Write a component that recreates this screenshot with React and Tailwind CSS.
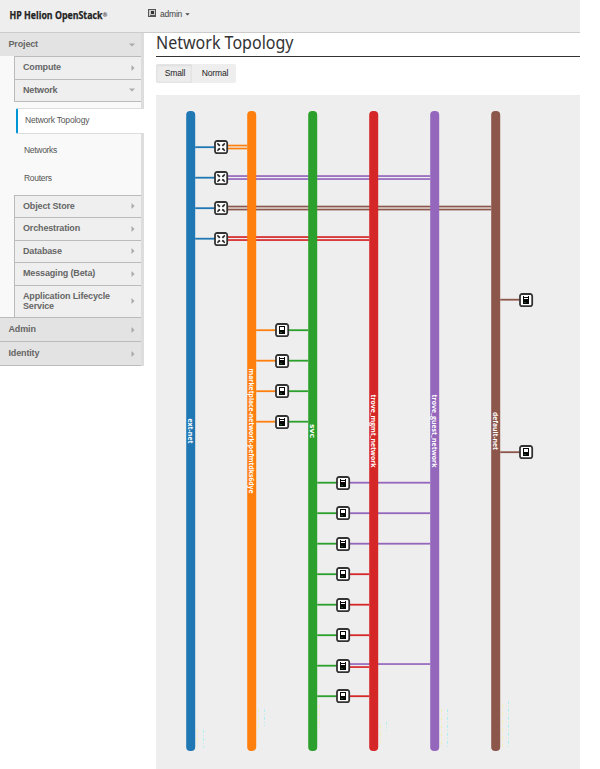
import React from "react";

const NETWORKS = [
  { name: "ext-net", color: "#1f77b4", length: 25 },
  { name: "marketplace-network-pefmtdks6dye", color: "#ff7f0e", length: 125 },
  { name: "svc", color: "#2ca02c", length: 14 },
  { name: "trove_mgmt_network", color: "#d62728", length: 73 },
  { name: "trove_guest_network", color: "#9467bd", length: 73 },
  { name: "default-net", color: "#8c564b", length: 38 },
];

// col: network whose right side holds the device; links: networks reached on the right
const DEVICES = [
  { row: 0, kind: "router", col: 0, links: [1, 1] },
  { row: 1, kind: "router", col: 0, links: [4, 4] },
  { row: 2, kind: "router", col: 0, links: [5, 5] },
  { row: 3, kind: "router", col: 0, links: [3, 3] },
  { row: 5, kind: "b", col: 5, links: [] },
  { row: 6, kind: "a", col: 1, links: [2] },
  { row: 7, kind: "b", col: 1, links: [2] },
  { row: 8, kind: "a", col: 1, links: [2] },
  { row: 9, kind: "b", col: 1, links: [2] },
  { row: 10, kind: "a", col: 5, links: [] },
  { row: 11, kind: "b", col: 2, links: [4] },
  { row: 12, kind: "a", col: 2, links: [4] },
  { row: 13, kind: "b", col: 2, links: [4] },
  { row: 14, kind: "a", col: 2, links: [3] },
  { row: 15, kind: "b", col: 2, links: [3] },
  { row: 16, kind: "a", col: 2, links: [3] },
  { row: 17, kind: "b", col: 2, links: [4, 3] },
  { row: 18, kind: "a", col: 2, links: [3] },
];

const SPECKS = [
  [41, 635, 652, "#eeeeb5"], [47, 635, 653, "#b5eeee"],
  [102, 614, 636, "#eeeeb5"], [108, 614, 631, "#b5eeee"],
  [163, 610, 633, "#eeeeb5"], [224, 630, 648, "#eeeeb5"],
  [230, 627, 636, "#b5eeee"], [285, 614, 652, "#eeeeb5"],
  [291, 614, 652, "#b5eeee"], [346, 609, 652, "#eeeeb5"],
  [352, 606, 653, "#b5eeee"],
];

const netX = (i) => 30.2 + i * 61;
const rowY = (row) => 52.1 + row * 30.5;

function Device({ kind, x, y }) {
  return (
    <g transform={`translate(${x} ${y})`}>
      <rect x="-6" y="-6" width="12.2" height="12.2" rx="2" fill="#fff" stroke="#333" strokeWidth="1.8" />
      {kind === "router" ? (
        <g stroke="#222" strokeWidth="1.5" fill="none">
          <path d="M-3.6-3.6l2.4 2.4M3.8-3.6L1.4-1.2M-3.6 3.8l2.4-2.4M3.8 3.8L1.4 1.4" />
          <path d="M-3.2-1.2h2v-1.4M3.4-1.2H1.4v-1.4M-1.2 3V1.4h-2M1.4 3V1.4h2" strokeWidth=".4" />
        </g>
      ) : (
        <g shapeRendering="crispEdges">
          <rect x="-3" y="-4" width="6" height="8" fill="#080808" />
          {kind === "a" ? (
            <rect x="-2" y="-3" width="4" height="3" fill="#fff" />
          ) : (
            <>
              <rect x="-2" y="-4" width="4" height="1" fill="#fff" />
              <rect x="-2" y="-2" width="4" height="1" fill="#fff" />
            </>
          )}
          <rect x="-2" y="2" width="2" height="1" fill="#174f24" />
        </g>
      )}
    </g>
  );
}

function Topology() {
  return (
    <svg className="block h-[674px] w-[424px] bg-[#eee]" viewBox="0 0 424 674">
      {DEVICES.map((d) => {
        const y = rowY(d.row);
        const start = netX(d.col) + 41;
        const single = d.links.length === 1;
        return (
          <g key={d.row}>
            <rect x={netX(d.col) + 9} y={y - 0.8} width="27" height="1.8" fill={NETWORKS[d.col].color} />
            {d.links.map((n, k) => {
              const off = single ? 0 : k === 0 ? -1.6 : 1.4;
              return (
                <rect key={k} x={start} y={y - 0.8 + off} width={netX(n) - start} height={single ? 1.8 : 1.7} fill={NETWORKS[n].color} />
              );
            })}
          </g>
        );
      })}
      {NETWORKS.map((n, i) => (
        <g key={n.name}>
          <rect x={netX(i)} y="16" width="9" height="640" rx="4" fill={n.color} />
          <text
            transform={`translate(${netX(i) + 2.2} 336) rotate(90)`}
            textAnchor="middle"
            textLength={n.length}
            lengthAdjust="spacingAndGlyphs"
            fill="#fff"
            className="font-['Open_Sans',sans-serif] text-[7.5px] font-bold"
          >
            {n.name}
          </text>
        </g>
      ))}
      {DEVICES.map((d) => (
        <Device key={d.row} kind={d.kind} x={Math.round(netX(d.col) + 34.8)} y={Math.round(rowY(d.row))} />
      ))}
      {SPECKS.map(([x, a, b, c]) => (
        <path key={x} d={`M${x + 0.5} ${a}V${b}`} stroke={c} strokeDasharray="3 2 1 2" />
      ))}
    </svg>
  );
}

function Caret({ open }) {
  return (
    <svg className="h-[6px] w-[6px] shrink-0" viewBox="0 0 6 6">
      <path d={open ? "M0 1.5h6L3 4.5z" : "M2.5 0v6L5.5 3z"} fill="#aaa" />
    </svg>
  );
}

function Item({ label, open, h }) {
  return (
    <div className={`${h} flex items-center justify-between border-t border-l border-[#bbb] bg-[#efefef] pr-[6px] pb-[2px] pl-[8px] text-[9px] leading-[10px] font-bold text-[#666]`}>
      <span className="w-[94px] tracking-[-0.15px]">{label}</span>
      <span className="mt-[1px] flex"><Caret open={open} /></span>
    </div>
  );
}

function Section({ label, open, h }) {
  return (
    <div className={`${h} flex items-center justify-between bg-[#e3e3e3] pr-[6px] pl-[8.5px] text-[9px] font-bold text-[#666]`}>
      <span className="tracking-[-0.15px]">{label}</span>
      <Caret open={open} />
    </div>
  );
}

export default function App() {
  return (
    <div className="h-[769px] w-[600px] overflow-hidden bg-white font-['Liberation_Sans',Arial,sans-serif]">
      <header className="flex h-[33px] w-[580px] border-b border-[#ccc] bg-[#eee]">
        <svg className="h-[32px] w-[148px] shrink-0" viewBox="0 0 148 32">
          <text x="9.5" y="19" textLength="93" lengthAdjust="spacingAndGlyphs" fill="#222" stroke="#222" strokeWidth=".25" className="font-['Open_Sans',sans-serif] text-[10.5px] font-bold">
            HP Helion OpenStack
          </text>
          <text x="102.8" y="16.5" fill="#333" className="font-['Open_Sans',sans-serif] text-[5.5px] font-bold">®</text>
        </svg>
        <div className="flex h-[28px] items-center text-[8.5px] text-[#444]">
          <svg className="mt-[-2px] mr-[4px] h-[8px] w-[8px]" viewBox="0 0 8 8" shapeRendering="crispEdges">
            <rect x=".5" y=".5" width="7" height="7" fill="#ccc" stroke="#555" />
            <rect x="3" y="2" width="3" height="3" fill="#333" />
            <rect x="2" y="6" width="5" height="1" fill="#555" />
          </svg>
          <span className="tracking-[-0.2px]">admin</span>
          <svg className="ml-[3px] h-[3px] w-[5px]" viewBox="0 0 5 3"><path d="M.3.3h4.4L2.5 2.6z" fill="#444" /></svg>
        </div>
      </header>
      <div className="flex">
        <aside className="h-[333px] w-[144px] shrink-0 bg-[linear-gradient(to_right,#f9f9f9_141px,#ddd_141px)]">
          <div className="w-[141px]"><Section label="Project" open h="h-[23px]" /></div>
          <div className="ml-[14px] w-[127px] border-b border-[#bbb]">
            <Item label="Compute" h="h-[23px]" />
            <Item label="Network" open h="h-[22px]" />
          </div>
          <nav className="h-[93px] pt-[6px] text-[8.5px] text-[#555]">
            <div className="ml-[16px] flex h-[26px] items-center rounded-l-[2px] border-y border-l-2 border-y-[#ddd] border-l-[#0096d6] bg-white pb-[2px] pl-[7px]">
              <span className="tracking-[-0.2px]">Network Topology</span>
            </div>
            <div className="mt-[2px] flex h-[28px] items-center pl-[24px] tracking-[-0.3px]">Networks</div>
            <div className="flex h-[28px] items-center pl-[24px] tracking-[-0.3px]">Routers</div>
          </nav>
          <div className="ml-[14px] w-[127px]">
            <Item label="Object Store" h="h-[22px]" />
            <Item label="Orchestration" h="h-[23px]" />
            <Item label="Database" h="h-[22px]" />
            <Item label="Messaging (Beta)" h="h-[23px]" />
            <Item label="Application Lifecycle Service" h="h-[32px]" />
          </div>
          <div className="w-[141px] border-b border-[#bbb]">
            <div className="border-t border-[#bbb]"><Section label="Admin" h="h-[23px]" /></div>
            <div className="border-t border-[#bbb]"><Section label="Identity" h="h-[23px]" /></div>
          </div>
        </aside>
        <main className="ml-[12px] w-[424px]">
          <div className="h-[24px] border-b border-[#333]">
            <svg className="h-[23px] w-[150px] overflow-visible" viewBox="0 0 150 23">
              <text x="0" y="16" textLength="137.5" lengthAdjust="spacingAndGlyphs" fill="#333" className="font-['Noto_Sans',sans-serif] text-[17.5px]">Network Topology</text>
            </svg>
          </div>
          <div className="mt-[7px] mb-[12px] flex h-[19px] w-[80px] rounded-[2px] bg-[#eee] text-[8.5px] text-[#222]">
            <div className="flex w-[36px] items-center justify-center rounded-l-[2px] border border-[#e3e3e3] bg-[#ececec] pl-[2px] tracking-[-0.15px] shadow-[inset_0_1px_2px_#ddd]">Small</div>
            <div className="flex w-[44px] items-center justify-center pl-[2px] tracking-[-0.15px]">Normal</div>
          </div>
          <Topology />
        </main>
      </div>
    </div>
  );
}
